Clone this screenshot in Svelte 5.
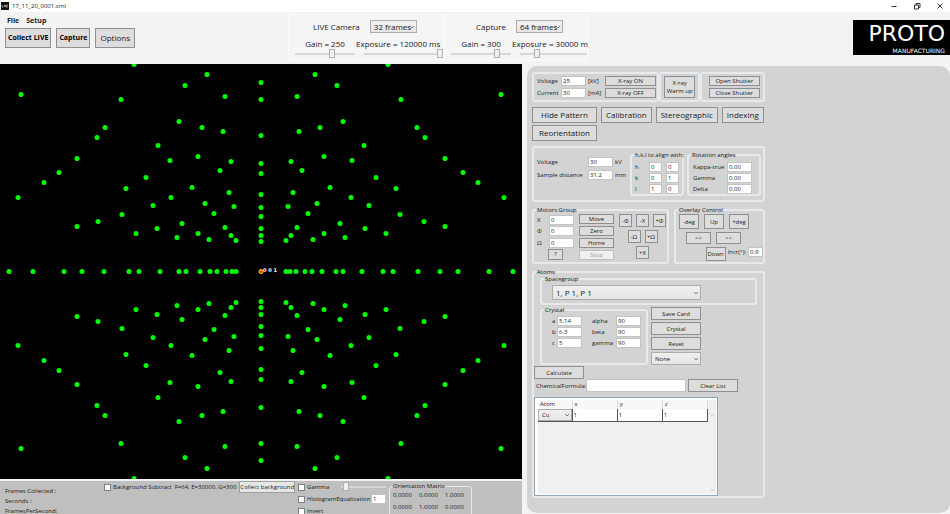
<script lang="ts">
  // Reflection offsets from the beam centre, mirrored into the four quadrants
  const quadrant: number[][] = [
    [127, 207], [54, 197], [76, 186], [240, 177], [140, 172], [36, 175],
    [82, 150], [156, 144], [59, 144], [38, 140], [164, 134], [103, 126],
    [184, 113], [91, 111], [63, 115], [30, 110], [202, 99], [41, 101],
    [217, 89], [115, 94], [135, 83], [69, 84], [32, 79], [243, 74],
    [90, 74], [108, 66], [56, 68], [27, 65], [139, 57], [47, 58],
    [163, 50], [184, 45], [79, 48], [104, 43], [36, 44], [125, 38],
    [63, 38], [84, 34], [30, 36], [52, 32], [25, 31]
  ];
  const vertical = [189, 172, 136, 108, 98, 77, 64, 55, 43, 36, 30];
  const horizontal = [252, 228, 197, 179, 157, 132, 122, 101, 82, 75, 61, 51, 44, 35, 29, 25];

  const spots = [
    ...quadrant.flatMap(([x, y]) => [[x, y], [-x, y], [x, -y], [-x, -y]]),
    ...vertical.flatMap((y) => [[0, y], [0, -y]]),
    ...horizontal.flatMap((x) => [[x, 0], [-x, 0]])
  ];

  let cameras = $state([
    { name: 'LIVE Camera', frames: '32 frames', gain: 250, gainMax: 400, exposure: 120000, exposureMax: 120000, unit: 'ms' },
    { name: 'Capture', frames: '64 frames', gain: 300, gainMax: 380, exposure: 30000, exposureMax: 130000, unit: 'm' }
  ]);

  let showPattern = $state(true);
  let voltage = $state('25');
  let current = $state('30');
  let simVoltage = $state('30');
  let distance = $state('31.2');

  let hkl = $state([
    { name: 'h', a: '0', b: '0' },
    { name: 'k', a: '0', b: '1' },
    { name: 'l', a: '1', b: '0' }
  ]);
  let angles = $state([
    { name: 'Kappa-true', value: '0.00' },
    { name: 'Gamma', value: '0.00' },
    { name: 'Delta', value: '0.00' }
  ]);
  let motors = $state([
    { name: 'X', value: '0' },
    { name: 'Φ', value: '0' },
    { name: 'Ω', value: '0' }
  ]);
  let cell = $state([
    { name: 'a', length: '5.14', angle: 'alpha', degrees: '90' },
    { name: 'b', length: '6.3', angle: 'beta', degrees: '90' },
    { name: 'c', length: '5', angle: 'gamma', degrees: '90' }
  ]);
  let increment = $state('0.9');
  let formula = $state('');
  let atoms = $state([{ element: 'Cu', x: '1', y: '1', z: '1' }]);

  let histogramBins = $state('1');
  const matrix = ['0.0000', '0.0000', '1.0000', '0.0000', '1.0000', '0.0000'];
</script>

{#snippet chevron()}
  <svg class="chevron" viewBox="0 0 6 4" aria-hidden="true">
    <path d="M1 1 L3 3 L5 1" fill="none" stroke="#666" stroke-width="0.8" />
  </svg>
{/snippet}

<div class="window">
  <header class="titlebar">
    <svg class="app-icon" viewBox="0 0 8 8" aria-hidden="true">
      <rect width="8" height="8" fill="#111" />
      <path d="M1 3V5H2.4M3 5L3.7 3L4.4 5M5 3V5H6.8M5 3H6.8M5 4H6.4" fill="none" stroke="#ddd" stroke-width="0.6" />
    </svg>
    <span>17_11_20_0001.xml</span>
    <div class="window-buttons">
      <button aria-label="Minimize">
        <svg viewBox="0 0 8 8"><path d="M1.5 4.5H6.5" stroke="#333" /></svg>
      </button>
      <button aria-label="Restore">
        <svg viewBox="0 0 8 8">
          <path d="M1.5 3H5.5V7H1.5ZM3 3V1.5H7V5.5H5.5" fill="none" stroke="#333" />
        </svg>
      </button>
      <button aria-label="Close">
        <svg viewBox="0 0 8 8"><path d="M1.5 1.5L6.5 6.5M6.5 1.5L1.5 6.5" stroke="#333" /></svg>
      </button>
    </div>
  </header>

  <div class="toolbar">
    <div class="tools">
      <nav class="menu">
        <button>File</button>
        <button>Setup</button>
      </nav>
      <div class="actions">
        <button class="btn strong">Collect LIVE</button>
        <button class="btn strong">Capture</button>
        <button class="btn options">Options</button>
      </div>
    </div>

    <div class="cameras">
      {#each cameras as camera}
        <section class="camera">
          <div class="camera-head">
            <span>{camera.name}</span>
            <span class="picker">
              <select aria-label="{camera.name} frames" bind:value={camera.frames}>
                <option>32 frames</option>
                <option>64 frames</option>
              </select>
              {@render chevron()}
            </span>
          </div>
          <div class="camera-sliders">
            <label class="gain">
              <span>Gain = {camera.gain}</span>
              <input type="range" min="0" max={camera.gainMax} bind:value={camera.gain} />
            </label>
            <label class="exposure">
              <span>Exposure = {camera.exposure} {camera.unit}</span>
              <input type="range" min="0" max={camera.exposureMax} bind:value={camera.exposure} />
            </label>
          </div>
        </section>
      {/each}
    </div>

    <div class="logo">
      <strong>PROTO</strong>
      <small>MANUFACTURING</small>
    </div>
  </div>

  <main>
    <div class="viewer">
      <svg class="pattern" viewBox="0 0 522 415" preserveAspectRatio="xMidYMid slice" role="img" aria-label="Laue pattern">
        <g transform="translate(261 207.5)">
          {#if showPattern}
            {#each spots as [x, y]}
              <circle cx={x} cy={y} r="2.5" fill="#00ff00" />
            {/each}
          {/if}
          <circle r="2" fill="#ff2a00" stroke="#ffe600" />
          <text x="2" y="0" fill="#fff">0 0 1</text>
        </g>
      </svg>

      <footer class="status">
        <div class="counters">
          <span>Frames Collected :</span>
          <span>Seconds :</span>
          <span>FramesPerSecond:</span>
        </div>
        <div class="background">
          <label class="check"><input type="checkbox" />Background Subtract</label>
          <span>F=64, E=30000, G=300</span>
          <button>Collect background</button>
        </div>
        <div class="adjust">
          <div class="adjust-row">
            <label class="check"><input type="checkbox" />Gamma</label>
            <input class="gamma" type="range" min="0" max="100" value="6" aria-label="Gamma level" />
          </div>
          <div class="adjust-row">
            <label class="check"><input type="checkbox" />HistogramEqualization</label>
            <input class="bins" type="text" aria-label="Histogram bins" bind:value={histogramBins} />
          </div>
          <label class="check"><input type="checkbox" />Invert</label>
        </div>
        <fieldset class="orientation">
          <legend>Orientation Matrix</legend>
          {#each matrix as value}
            <span>{value}</span>
          {/each}
        </fieldset>
      </footer>
    </div>

    <aside class="panel">
      <div class="controls">
        <div class="xray">
          <div class="box generator">
            <label for="voltage">Voltage</label>
            <input id="voltage" type="text" bind:value={voltage} />
            <span>[kV]</span>
            <button class="btn">X-ray ON</button>
            <label for="current">Current</label>
            <input id="current" type="text" bind:value={current} />
            <span>[mA]</span>
            <button class="btn">X-ray OFF</button>
          </div>
          <div class="box warmup">
            <button class="btn">X-ray<br />Warm up</button>
          </div>
          <div class="box shutter">
            <button class="btn">Open Shutter</button>
            <button class="btn">Close Shutter</button>
          </div>
        </div>

        <nav class="modes">
          <button class="btn wide" onclick={() => (showPattern = !showPattern)}>
            {showPattern ? 'Hide' : 'Show'} Pattern
          </button>
          <button class="btn">Calibration</button>
          <button class="btn">Stereographic</button>
          <button class="btn">Indexing</button>
          <button class="btn wide">Reorientation</button>
        </nav>

        <div class="box simulation">
          <div class="sample">
            <label for="sim-voltage">Voltage</label>
            <input id="sim-voltage" type="text" bind:value={simVoltage} />
            <span>kV</span>
            <label for="distance">Sample distance</label>
            <input id="distance" type="text" bind:value={distance} />
            <span>mm</span>
          </div>
          <fieldset class="hkl">
            <legend>h,k,l to align with:</legend>
            {#each hkl as row}
              <label for="hkl-{row.name}">{row.name}</label>
              <input id="hkl-{row.name}" type="text" bind:value={row.a} />
              <input type="text" aria-label="{row.name} second" bind:value={row.b} />
            {/each}
          </fieldset>
          <fieldset class="angles">
            <legend>Rotation angles</legend>
            {#each angles as angle}
              <label for="angle-{angle.name}">{angle.name}</label>
              <input id="angle-{angle.name}" type="text" bind:value={angle.value} />
            {/each}
          </fieldset>
        </div>

        <div class="motion">
          <fieldset class="motors">
            <legend>Motors Group</legend>
            <div class="positions">
              {#each motors as motor}
                <label for="motor-{motor.name}">{motor.name}</label>
                <input id="motor-{motor.name}" type="text" bind:value={motor.value} />
              {/each}
              <button class="btn help">?</button>
            </div>
            <div class="commands">
              <button class="btn">Move</button>
              <button class="btn">Zero</button>
              <button class="btn">Home</button>
              <button class="btn" disabled>Stop</button>
            </div>
            <div class="jog">
              <div>
                <button class="btn">-Φ</button>
                <button class="btn">-X</button>
                <button class="btn">+Φ</button>
              </div>
              <div>
                <button class="btn">-Ω</button>
                <button class="btn">+Ω</button>
              </div>
              <div>
                <button class="btn">+X</button>
              </div>
            </div>
          </fieldset>
          <fieldset class="overlay">
            <legend>Overlay Control</legend>
            <div class="turn">
              <button class="btn">-deg</button>
              <button class="btn">Up</button>
              <button class="btn">+deg</button>
            </div>
            <div class="shift">
              <button class="btn">&lt;&lt;</button>
              <button class="btn">&gt;&gt;</button>
            </div>
            <div class="step">
              <button class="btn">Down</button>
              <label for="increment">Incr(°):</label>
              <input id="increment" type="text" bind:value={increment} />
            </div>
          </fieldset>
        </div>

        <fieldset class="atoms">
          <legend>Atoms</legend>
          <fieldset class="spacegroup">
            <legend>Spacegroup</legend>
            <span class="picker">
              <select aria-label="Spacegroup">
                <option>1, P 1, P 1</option>
              </select>
              {@render chevron()}
            </span>
          </fieldset>

          <div class="crystal-row">
            <fieldset class="crystal">
              <legend>Crystal</legend>
              {#each cell as row}
                <label for="cell-{row.name}">{row.name}</label>
                <input id="cell-{row.name}" type="text" bind:value={row.length} />
                <label class="angle" for="cell-{row.angle}">{row.angle}</label>
                <input id="cell-{row.angle}" type="text" bind:value={row.degrees} />
              {/each}
            </fieldset>
            <div class="card-buttons">
              <button class="btn">Save Card</button>
              <button class="btn">Crystal</button>
              <button class="btn">Reset</button>
              <span class="picker">
                <select aria-label="Preset">
                  <option>None</option>
                </select>
                {@render chevron()}
              </span>
            </div>
          </div>

          <button class="btn tall">Calculate</button>
          <div class="formula">
            <label for="formula">ChemicalFormula:</label>
            <input id="formula" type="text" bind:value={formula} />
            <button class="btn tall">Clear List</button>
          </div>

          <div class="atom-list">
            <table>
              <thead>
                <tr><th class="element">Atom</th><th>x</th><th>y</th><th>z</th></tr>
              </thead>
              <tbody>
                {#each atoms as atom}
                  <tr>
                    <td>
                      <span class="picker">
                        <select aria-label="Element" bind:value={atom.element}>
                          <option>Cu</option>
                        </select>
                        {@render chevron()}
                      </span>
                    </td>
                    <td><input type="text" aria-label="x" bind:value={atom.x} /></td>
                    <td><input type="text" aria-label="y" bind:value={atom.y} /></td>
                    <td><input type="text" aria-label="z" bind:value={atom.z} /></td>
                  </tr>
                {/each}
              </tbody>
            </table>
            <div class="scrollbar">
              <svg viewBox="0 0 6 4"><path d="M1 3L3 1L5 3" fill="none" stroke="#bbb" /></svg>
              <svg viewBox="0 0 6 4"><path d="M1 1L3 3L5 1" fill="none" stroke="#bbb" /></svg>
            </div>
          </div>
        </fieldset>
      </div>
    </aside>
  </main>
</div>

<style>
  :global(body) {
    margin: 0;
    overflow: hidden;
  }

  .window {
    display: flex;
    flex-direction: column;
    height: 100vh;
    background: #f3f3f3;
    color: #1a1a1a;
    font: 6px/10px "Open Sans", "Noto Sans", sans-serif;
  }

  .window :global(*) {
    box-sizing: border-box;
  }

  button,
  input,
  select {
    margin: 0;
    padding: 0;
    font: inherit;
    color: inherit;
  }

  input[type='text'] {
    width: 25px;
    height: 10px;
    padding: 0 1px;
    border: 1px solid #c4c4c4;
    background: #fff;
    line-height: 8px;
  }

  input[type='checkbox'] {
    appearance: none;
    width: 7px;
    height: 7px;
    border: 1px solid #808080;
    background: #fff;
  }

  input[type='checkbox']:checked {
    background: #333;
  }

  input[type='range'] {
    appearance: none;
    display: block;
    height: 9px;
    background: linear-gradient(#d6d6d6, #d6d6d6) center / 100% 2px no-repeat;
  }

  input[type='range']::-webkit-slider-thumb {
    appearance: none;
    width: 6px;
    height: 9px;
    border: 1px solid #b0b0b0;
    background: #f0f0f0;
  }

  .btn {
    border: 1px solid #8f8f8f;
    background: #dddddd;
    line-height: 8px;
    white-space: nowrap;
  }

  .btn:disabled {
    border-color: #bdbdbd;
    background: #f0f0f0;
    color: #9a9a9a;
  }

  .box,
  fieldset {
    min-width: 0;
    margin: 0;
    padding: 0;
    border: 2px solid #e6eaec;
    border-radius: 3px;
  }

  /* --inset is the left padding of a group, its title stays at the border */
  fieldset {
    --inset: 0px;
    padding-left: var(--inset);
  }

  legend {
    margin-left: calc(2px - var(--inset));
    padding: 0 1px;
    line-height: 6px;
    white-space: nowrap;
  }

  .picker {
    position: relative;
    display: block;
  }

  .picker select {
    appearance: none;
    display: block;
    width: 100%;
    height: 13px;
    padding: 0 3px;
    border: 1px solid #adadad;
    border-radius: 0;
    background: linear-gradient(#f0f0f0, #e5e5e5);
  }

  .chevron {
    position: absolute;
    top: 50%;
    right: 2px;
    width: 6px;
    height: 4px;
    margin-top: -2px;
    pointer-events: none;
  }

  .titlebar {
    display: flex;
    align-items: center;
    flex: none;
    gap: 3px;
    height: 12px;
    padding-left: 1px;
    background: #fff;
  }

  .app-icon {
    width: 8px;
    height: 8px;
  }

  .window-buttons {
    display: flex;
    gap: 15px;
    margin-left: auto;
    padding-right: 6px;
  }

  .window-buttons button {
    width: 8px;
    height: 8px;
    border: 0;
    background: none;
  }

  .window-buttons svg {
    display: block;
  }

  .toolbar {
    display: flex;
    flex: none;
    height: 52px;
    font-size: 8px;
  }

  .tools {
    flex: 0 0 288px;
    padding: 4px 5px;
  }

  .menu {
    display: flex;
    gap: 7px;
    padding-left: 2px;
  }

  .menu button {
    border: 0;
    background: none;
    font-size: 7px;
    font-weight: 700;
  }

  .actions {
    display: flex;
    gap: 5px;
    padding-top: 2px;
  }

  .actions .btn {
    height: 20px;
    padding: 0 2px;
  }

  .actions .strong {
    color: #000;
    font-size: 7px;
    font-weight: 700;
  }

  .actions .options {
    padding: 0 4px;
  }

  .cameras {
    display: flex;
    padding: 2px 0 3px;
  }

  .camera {
    width: 156px;
    padding: 5px 0 0 6px;
    border: 1px solid #fafafa;
    background: #f5f5f5;
  }

  .camera + .camera {
    width: 144px;
  }

  .camera-head {
    display: flex;
    align-items: center;
    gap: 10px;
    padding-left: 18px;
  }

  .camera + .camera .camera-head {
    padding-left: 25px;
  }

  .camera-head .picker {
    width: 47px;
  }

  .camera-sliders {
    display: flex;
    gap: 1px;
    padding-top: 6px;
    white-space: nowrap;
  }

  .gain {
    flex: 0 0 60px;
  }

  .gain span,
  .exposure span {
    display: block;
    text-align: center;
  }

  .gain input {
    width: 60px;
  }

  .exposure {
    flex: 1;
    min-width: 0;
  }

  .exposure input {
    width: calc(100% - 8px);
    margin-left: 8px;
  }

  .exposure span {
    text-align: left;
  }

  .logo {
    display: flex;
    flex-direction: column;
    justify-content: center;
    align-self: flex-start;
    align-items: flex-end;
    width: 97px;
    height: 35px;
    margin: 8px 0 0 auto;
    padding-right: 5px;
    background: #000;
    color: #fff;
    font-family: "DejaVu Sans", sans-serif;
  }

  .logo strong {
    font-size: 22px;
    font-weight: 400;
    line-height: 26px;
  }

  .logo small {
    font-size: 6px;
    line-height: 8px;
  }

  main {
    display: grid;
    flex: 1;
    grid-template-columns: minmax(0, 522fr) minmax(0, 428fr);
    grid-template-rows: minmax(0, 1fr);
    min-height: 0;
  }

  .viewer {
    display: flex;
    flex-direction: column;
    min-width: 0;
  }

  .pattern {
    display: block;
    flex: 1;
    width: 100%;
    min-height: 0;
    background: #000;
  }

  .pattern text {
    font: 700 5px "DejaVu Sans", sans-serif;
  }

  .status {
    display: flex;
    align-items: flex-start;
    flex: none;
    height: 35px;
    overflow: hidden;
    border-top: 2px solid #f0f0f0;
    background: #bfbfbf;
    white-space: nowrap;
  }

  .counters {
    display: flex;
    flex-direction: column;
    flex: 0 0 100px;
    padding: 5px 0 0 5px;
  }

  .background {
    display: flex;
    align-items: center;
    gap: 3px;
    flex: 0 0 194px;
    padding-left: 4px;
  }

  .background button {
    height: 12px;
    margin-left: auto;
    border: 1px solid #a0a0a0;
    background: #e6e6e6;
    line-height: 8px;
  }

  .check {
    display: flex;
    align-items: center;
    gap: 2px;
  }

  .adjust {
    display: flex;
    flex-direction: column;
    gap: 2px;
    flex: 0 0 94px;
    padding: 1px 3px;
  }

  .adjust-row {
    display: flex;
    justify-content: space-between;
  }

  .adjust .bins {
    width: 15px;
  }

  .adjust .gamma {
    width: 45px;
  }

  .gamma::-webkit-slider-thumb {
    width: 5px;
  }

  .orientation {
    --inset: 3px;
    display: grid;
    grid-template-columns: repeat(3, 26px);
    align-content: start;
    row-gap: 2px;
    height: 40px;
    margin-top: 2px;
    padding-top: 1px;
    border-width: 1px;
  }

  .panel {
    min-width: 0;
    margin: 2px 0 1px 5px;
    padding: 6px 5px;
    overflow: hidden;
    border-radius: 10px;
    background: #d3d3d3;
  }

  .controls {
    display: flex;
    flex-direction: column;
    gap: 5px;
    max-width: 233px;
  }

  .xray {
    display: flex;
  }

  .generator {
    display: grid;
    grid-template-columns: 22px 25px 15px 51px;
    align-content: center;
    gap: 2px;
    padding: 2px 3px;
  }

  .warmup {
    padding: 2px 3px;
  }

  .warmup .btn {
    width: 31px;
    height: 22px;
  }

  .shutter {
    display: grid;
    gap: 2px;
    padding: 2px 4px 2px 7px;
  }

  .shutter .btn {
    width: 51px;
    height: 10px;
  }

  .modes {
    display: flex;
    flex-wrap: wrap;
    gap: 2px 4px;
    font-size: 8px;
  }

  .modes .btn {
    height: 16px;
    padding: 0 4px;
  }

  .modes .wide {
    width: 65px;
  }

  .simulation {
    display: flex;
    gap: 3px;
    padding: 4px 2px 4px 3px;
  }

  .sample {
    display: grid;
    grid-template-columns: 50px 25px 13px;
    align-content: start;
    gap: 3px 1px;
    padding-top: 5px;
  }

  .sample span {
    padding-left: 1px;
  }

  .hkl {
    --inset: 3px;
    display: grid;
    grid-template-columns: 10px 13px 13px;
    gap: 1px 4px;
    width: 54px;
    padding-top: 4px;
  }

  .hkl input[type='text'] {
    width: 13px;
  }

  .angles {
    --inset: 4px;
    display: grid;
    flex: 1;
    grid-template-columns: 33px 25px;
    gap: 1px;
    padding-top: 4px;
  }

  .motion {
    display: flex;
    gap: 5px;
    height: 57px;
  }

  .motors {
    --inset: 3px;
    display: grid;
    grid-template-columns: 37px 35px 47px;
    align-content: start;
    column-gap: 5px;
    width: 137px;
    padding-top: 1px;
  }

  .positions {
    display: grid;
    grid-template-columns: 12px 25px;
    row-gap: 1px;
    padding-top: 1px;
  }

  .help {
    grid-column: 1 / 3;
    justify-self: center;
    width: 15px;
    height: 11px;
  }

  .commands {
    display: grid;
    grid-auto-rows: 10px;
    gap: 2px;
  }

  .jog {
    display: grid;
    align-content: start;
    gap: 3px;
  }

  .jog div {
    display: flex;
    justify-content: center;
    gap: 4px;
  }

  .jog .btn {
    width: 13px;
    height: 13px;
  }

  .overlay {
    --inset: 3px;
    flex: 1;
    padding-top: 1px;
  }

  .overlay div {
    display: flex;
    gap: 5px;
  }

  .overlay .btn {
    width: 20px;
    height: 15px;
  }

  .overlay .shift {
    padding: 3px 7px;
  }

  .overlay .shift .btn {
    width: 25px;
    height: 12px;
  }

  .overlay .step {
    justify-content: flex-end;
    gap: 2px;
  }

  .overlay .step .btn {
    height: 14px;
  }

  .overlay .step input {
    width: 15px;
  }

  .atoms {
    padding-top: 1px;
  }

  .spacegroup {
    --inset: 10px;
    margin: 0 6px;
    padding-top: 3px;
    padding-bottom: 3px;
  }

  .spacegroup .picker {
    width: 149px;
  }

  .spacegroup .picker select {
    height: 15px;
    font-size: 8px;
  }

  .crystal-row {
    display: flex;
    gap: 3px;
    padding: 2px 6px 1px;
  }

  .crystal {
    --inset: 10px;
    display: grid;
    grid-template-columns: 5px 25px 34px 25px;
    align-content: start;
    row-gap: 1px;
    padding-top: 3px;
    padding-right: 5px;
  }

  .crystal .angle {
    padding-left: 10px;
  }

  .card-buttons {
    display: grid;
    grid-auto-rows: 13px;
    gap: 2px;
    width: 50px;
  }

  .tall {
    width: 50px;
    height: 13px;
  }

  .atoms > .tall {
    display: block;
  }

  .formula {
    display: flex;
    align-items: center;
    gap: 2px;
    padding-left: 2px;
  }

  .formula label {
    width: 48px;
  }

  .formula input[type='text'] {
    width: 100px;
    height: 13px;
  }

  .atom-list {
    display: flex;
    width: 184px;
    height: 99px;
    margin-top: 5px;
    padding: 2px 1px 1px 3px;
    border: 1px solid #93a7bb;
    background: linear-gradient(#f0f0f0, #f0f0f0) content-box, #fff;
  }

  table {
    width: 170px;
    height: 22px;
    border-collapse: collapse;
    table-layout: fixed;
  }

  th {
    height: 9px;
    padding: 0 0 0 2px;
    border-right: 1px solid #ddd;
    background: #f8f8f8;
    font-weight: 400;
    line-height: 9px;
    text-align: left;
  }

  .element {
    width: 34px;
  }

  td {
    padding: 0;
    border-right: 1px solid #555;
    border-bottom: 1px solid #555;
    background: #fff;
  }

  td input[type='text'] {
    display: block;
    width: 100%;
    border: 0;
  }

  td .picker select {
    height: 12px;
  }

  .scrollbar {
    display: flex;
    flex: 1;
    flex-direction: column;
    justify-content: space-between;
    align-items: center;
    padding: 13px 0 2px;
  }

  .scrollbar svg {
    width: 5px;
    height: 4px;
  }
</style>
